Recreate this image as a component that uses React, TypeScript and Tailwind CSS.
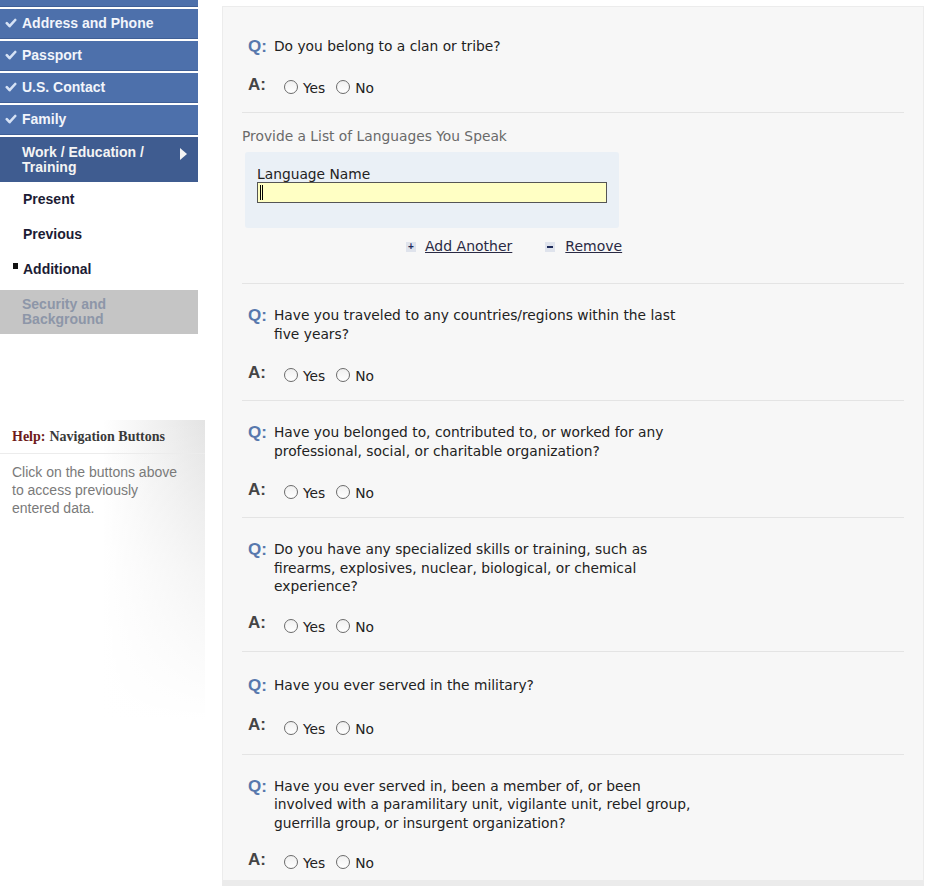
import React from "react";

const sans = { fontFamily: '"Liberation Sans", Arial, sans-serif' };
const verd = { fontFamily: '"DejaVu Sans", Verdana, sans-serif' };

function Check() {
  return (
    <svg width="12" height="11" viewBox="0 0 12 11" className="shrink-0">
      <path d="M1.8 5.2 L4.6 8.2 L10.2 2" stroke="#d6e2f5" strokeWidth="2.6" fill="none" strokeLinecap="round" strokeLinejoin="round" />
    </svg>
  );
}

function NavDone({ label }: { label: string }) {
  return (
    <div className="h-[30px] bg-[#4d70ab] border-b border-[#3f5f96] flex items-center gap-[5px] pl-[5px] text-[14px] font-bold text-[#f2f5fb]" style={sans}>
      <Check />
      <span>{label}</span>
    </div>
  );
}

function Radio({ label }: { label: string }) {
  return (
    <span className="inline-flex items-center gap-[5px]">
      <span className="w-[14px] h-[14px] rounded-full border border-[#6b6b6b] bg-gradient-to-b from-[#f0f0f0] to-white inline-block"></span>
      <span className="text-[13.8px] text-[#222] leading-[20px] pt-[2px]">{label}</span>
    </span>
  );
}

function Question({ lines, last, roomy }: { lines: string[]; last?: boolean; roomy?: boolean }) {
  const tight = lines.length >= 3;
  return (
    <div className={(last ? "" : "border-b border-[#e4e4e4] ") + (roomy ? "pt-[24px] pb-[15px]" : "pt-[22px] pb-[14px]") + " pl-[6px]"}>
      <div className="flex">
        <span className="w-[26px] shrink-0 text-[17px] font-bold text-[#5878ad] leading-[19px]" style={sans}>Q:</span>
        <div className={(tight ? "leading-[18.5px]" : "leading-[19px]") + " text-[13.8px] text-[#222]"}>
          {lines.map((l, i) => (
            <div key={i}>{l}</div>
          ))}
        </div>
      </div>
      <div className={(roomy ? "mt-[22px]" : tight ? "mt-[19px]" : "mt-[20px]") + " flex items-center h-[22px]"}>
        <span className="w-[36px] shrink-0 text-[17px] font-bold text-[#454545] leading-[19px] -mt-[6px]" style={sans}>A:</span>
        <div className="flex items-center gap-[11px]">
          <Radio label="Yes" />
          <Radio label="No" />
        </div>
      </div>
    </div>
  );
}

export default function App() {
  return (
    <div className="w-[949px] h-[893px] bg-white flex overflow-hidden">
      {/* Sidebar */}
      <div className="w-[198px] shrink-0 flex flex-col">
        <div className="h-[7px] bg-[#4d70ab] border-b border-[#3f5f96]"></div>
        <div className="flex flex-col gap-[2px] mt-[2px]">
          <NavDone label="Address and Phone" />
          <NavDone label="Passport" />
          <NavDone label="U.S. Contact" />
          <NavDone label="Family" />
          <div className="h-[45px] bg-[#3f5c90] flex items-center justify-between pl-[22px] pr-[11px] text-[14px] font-bold text-[#f4f4f4] leading-[15px]" style={sans}>
            <span>Work / Education /<br />Training</span>
            <svg width="7" height="12" viewBox="0 0 7 12" className="-mt-[12px]">
              <path d="M0 0 L7 6 L0 12 Z" fill="#f4f4f4" />
            </svg>
          </div>
        </div>
        <div className="flex flex-col text-[14px] font-bold text-[#1c1c34]" style={sans}>
          <div className="h-[35px] flex items-center pl-[23px]">Present</div>
          <div className="h-[35px] flex items-center pl-[23px]">Previous</div>
          <div className="h-[35px] flex items-center pl-[13px]">
            <span className="w-[5px] h-[6px] bg-[#111] -mt-[8px] mr-[5px]"></span>
            Additional
          </div>
        </div>
        <div className="mt-[3px] h-[44px] bg-[#c5c5c5] flex items-center pl-[22px] text-[14px] font-bold text-[#8d96a8] leading-[15px]" style={sans}>
          <span>Security and<br />Background</span>
        </div>

        <div className="mt-[86px] w-[205px] h-[300px] relative bg-gradient-to-r from-white via-white to-[#e4e4e4]">
          <div className="absolute inset-0 bg-gradient-to-b from-transparent via-[rgba(255,255,255,0.6)] to-white"></div>
          <div className="relative">
            <div className="h-[34px] flex items-center pl-[12px] border-b border-[#ececec] text-[14px] font-bold" style={{ fontFamily: '"Liberation Serif", "Times New Roman", serif' }}>
              <span className="text-[#6e1a1a]">Help:</span>
              <span className="text-[#3a3a3a] ml-[4px]">Navigation Buttons</span>
            </div>
            <div className="pl-[12px] pt-[9px] text-[14px] leading-[18px] text-[#7a7a7a]" style={sans}>
              Click on the buttons above<br />to access previously<br />entered data.
            </div>
          </div>
        </div>
      </div>

      {/* Main panel */}
      <div className="ml-[24px] mt-[6px] w-[702px] h-[880px] bg-[#f7f7f7] border border-[#ececec] border-b-[6px] border-b-[#ebebeb] shrink-0" style={verd}>
        <div className="pl-[19px] pr-[19px] pt-[8px]">
          <Question lines={["Do you belong to a clan or tribe?"]} />

          <div className="border-b border-[#e4e4e4] pt-[14px] pb-[26px]">
            <div className="text-[13.8px] text-[#6a6a6a] leading-[18px]">Provide a List of Languages You Speak</div>
            <div className="ml-[3px] mt-[7px] w-[374px] h-[76px] bg-[#eaf0f6] rounded-[3px] pt-[14px] pl-[12px]">
              <div className="text-[13.8px] text-[#222] leading-[16px]">Language Name</div>
              <div className="w-[350px] h-[21px] bg-[#ffffc4] border border-[#555] flex items-center pl-[2px]">
                <span className="w-[1px] h-[15px] bg-black"></span>
                <span className="w-[1px] h-[15px] bg-black ml-[1px]"></span>
              </div>
            </div>
            <div className="flex items-center mt-[8px] ml-[164px] text-[14px] text-[#2a2a44]">
              <span className="w-[10px] h-[10px] bg-[#dfe3ec] flex items-center justify-center text-[#1e2a5a] text-[10px] font-bold leading-[10px] mr-[9px]" style={sans}>+</span>
              <span className="underline">Add Another</span>
              <span className="w-[10px] h-[10px] bg-[#dfe3ec] flex items-center justify-center ml-[33px] mr-[10px]">
                <span className="w-[6px] h-[2px] bg-[#1e2a5a]"></span>
              </span>
              <span className="underline">Remove</span>
            </div>
          </div>

          <Question lines={["Have you traveled to any countries/regions within the last", "five years?"]} />
          <Question lines={["Have you belonged to, contributed to, or worked for any", "professional, social, or charitable organization?"]} />
          <Question lines={["Do you have any specialized skills or training, such as", "firearms, explosives, nuclear, biological, or chemical", "experience?"]} />
          <Question roomy lines={["Have you ever served in the military?"]} />
          <Question last lines={["Have you ever served in, been a member of, or been", "involved with a paramilitary unit, vigilante unit, rebel group,", "guerrilla group, or insurgent organization?"]} />
        </div>
      </div>
    </div>
  );
}
